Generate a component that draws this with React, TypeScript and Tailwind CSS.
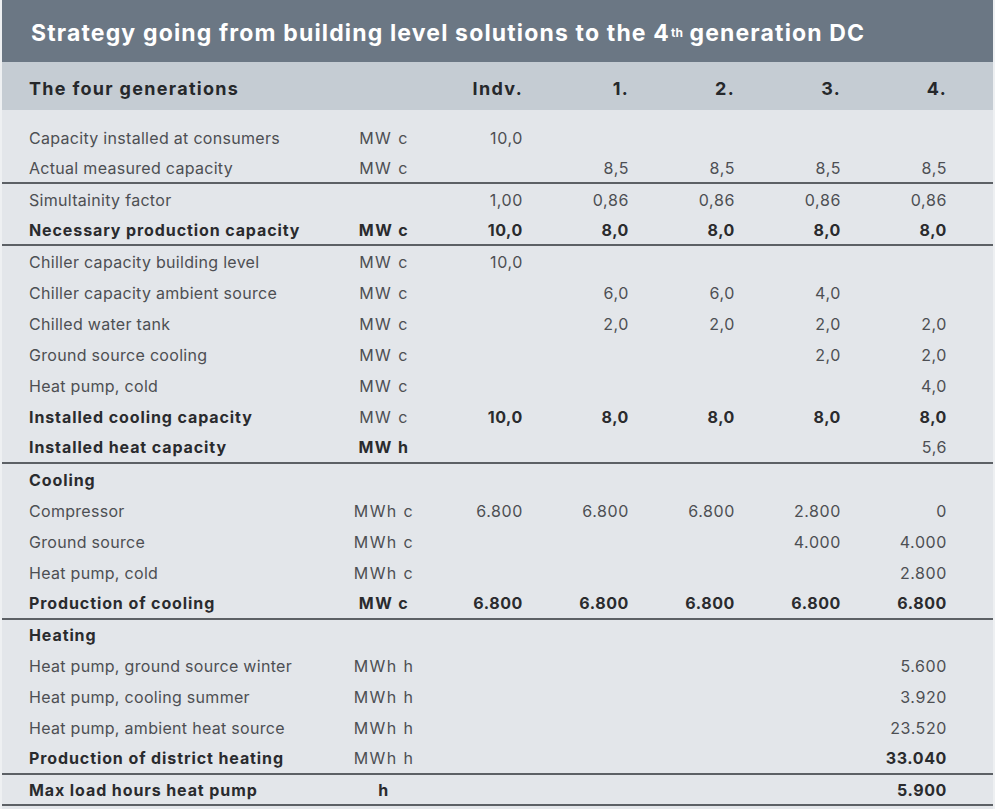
type Row = {
  label: string;
  unit?: string;
  vals?: string[];
  bold?: boolean;
  boldUnit?: boolean;
  boldVals?: boolean;
  line?: boolean;
};

const rows: Row[] = [
  { label: 'Capacity installed at consumers', unit: 'MW c', vals: ['10,0', '', '', '', ''] },
  { label: 'Actual measured capacity', unit: 'MW c', vals: ['', '8,5', '8,5', '8,5', '8,5'], line: true },
  { label: 'Simultainity factor', unit: '', vals: ['1,00', '0,86', '0,86', '0,86', '0,86'] },
  { label: 'Necessary production capacity', unit: 'MW c', vals: ['10,0', '8,0', '8,0', '8,0', '8,0'], bold: true, boldUnit: true, boldVals: true, line: true },
  { label: 'Chiller capacity building level', unit: 'MW c', vals: ['10,0', '', '', '', ''] },
  { label: 'Chiller capacity ambient source', unit: 'MW c', vals: ['', '6,0', '6,0', '4,0', ''] },
  { label: 'Chilled water tank', unit: 'MW c', vals: ['', '2,0', '2,0', '2,0', '2,0'] },
  { label: 'Ground source cooling', unit: 'MW c', vals: ['', '', '', '2,0', '2,0'] },
  { label: 'Heat pump, cold', unit: 'MW c', vals: ['', '', '', '', '4,0'] },
  { label: 'Installed cooling capacity', unit: 'MW c', vals: ['10,0', '8,0', '8,0', '8,0', '8,0'], bold: true, boldVals: true },
  { label: 'Installed heat capacity', unit: 'MW h', vals: ['', '', '', '', '5,6'], bold: true, boldUnit: true, line: true },
  { label: 'Cooling', bold: true },
  { label: 'Compressor', unit: 'MWh c', vals: ['6.800', '6.800', '6.800', '2.800', '0'] },
  { label: 'Ground source', unit: 'MWh c', vals: ['', '', '', '4.000', '4.000'] },
  { label: 'Heat pump, cold', unit: 'MWh c', vals: ['', '', '', '', '2.800'] },
  { label: 'Production of cooling', unit: 'MW c', vals: ['6.800', '6.800', '6.800', '6.800', '6.800'], bold: true, boldUnit: true, boldVals: true, line: true },
  { label: 'Heating', bold: true },
  { label: 'Heat pump, ground source winter', unit: 'MWh h', vals: ['', '', '', '', '5.600'] },
  { label: 'Heat pump, cooling summer', unit: 'MWh h', vals: ['', '', '', '', '3.920'] },
  { label: 'Heat pump, ambient heat source', unit: 'MWh h', vals: ['', '', '', '', '23.520'] },
  { label: 'Production of district heating', unit: 'MWh h', vals: ['', '', '', '', '33.040'], bold: true, boldVals: true, line: true },
  { label: 'Max load hours heat pump', unit: 'h', vals: ['', '', '', '', '5.900'], bold: true, boldUnit: true, boldVals: true, line: true },
];

// column edges measured from the print: label 29, unit centred on 384, values right-aligned
const grid = 'grid grid-cols-[311px_88px_95px_106px_106px_106px_106px] pl-[27px]';
const strong = 'font-bold text-[#2a2b2e] tracking-[0.9px]';

export default function App() {
  return (
    <div className="w-[995px] h-[809px] px-[2px] bg-[#eef0f2] overflow-hidden">
      <div className="h-full bg-[#e3e6ea] font-['Inter',sans-serif] text-[16px] tracking-[0.3px] text-[#4d4f53]">
        <div className="h-[62px] bg-[#6b7784] flex items-center pl-[29px] pt-[4px] text-white font-bold text-[23px] tracking-[1.15px]">
          <span>
            Strategy going from building level solutions to the 4
            <sup className="text-[12px] tracking-normal relative -top-[4px] ml-[1px]">th</sup> generation DC
          </span>
        </div>
        <div className={`${grid} h-[48px] pt-[4px] bg-[#c5ccd3] items-center font-bold text-[18px] tracking-[1.3px] text-[#26282b]`}>
          <div>The four generations</div>
          <div></div>
          <div className="text-right">Indv.</div>
          <div className="text-right">1.</div>
          <div className="text-right">2.</div>
          <div className="text-right">3.</div>
          <div className="text-right">4.</div>
        </div>
        <div className="pt-[12px]">
          {rows.map((r, i) => (
            <div
              key={i}
              className={`${grid} h-[31.1px] items-center ${r.line ? 'border-b-2 border-[#5c6065]' : ''}`}
            >
              <div className={r.bold ? strong : ''}>{r.label}</div>
              <div className={`text-center tracking-[1.4px] ${r.boldUnit ? 'font-bold text-[#2a2b2e]' : ''}`}>{r.unit}</div>
              {(r.vals ?? ['', '', '', '', '']).map((v, j) => (
                <div key={j} className={`text-right tracking-[0.6px] ${r.boldVals ? 'font-bold text-[#2a2b2e]' : ''}`}>
                  {v}
                </div>
              ))}
            </div>
          ))}
        </div>
      </div>
    </div>
  );
}
